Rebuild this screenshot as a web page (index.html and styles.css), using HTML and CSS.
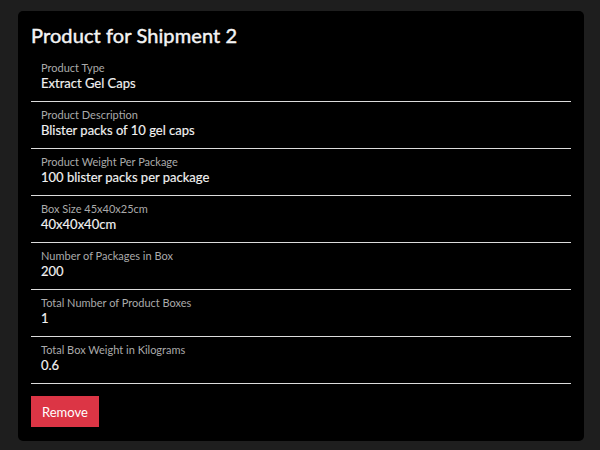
FILE: index.html
```html
<!DOCTYPE html>
<html>
<head>
<meta charset="utf-8">
<link rel="stylesheet" href="styles.css">
</head>
<body>
<div class="card">
  <h2 class="title">Product for Shipment 2</h2>
  <div class="list">
    <div class="row"><div class="label">Product Type</div><div class="value">Extract Gel Caps</div></div>
    <div class="row"><div class="label">Product Description</div><div class="value">Blister packs of 10 gel caps</div></div>
    <div class="row"><div class="label">Product Weight Per Package</div><div class="value">100 blister packs per package</div></div>
    <div class="row"><div class="label">Box Size 45x40x25cm</div><div class="value">40x40x40cm</div></div>
    <div class="row"><div class="label">Number of Packages in Box</div><div class="value">200</div></div>
    <div class="row"><div class="label">Total Number of Product Boxes</div><div class="value">1</div></div>
    <div class="row"><div class="label">Total Box Weight in Kilograms</div><div class="value">0.6</div></div>
  </div>
  <button class="btn-remove">Remove</button>
</div>
</body>
</html>
```
FILE: styles.css
```css
html, body {
  margin: 0;
  background: #1e1e1e;
  font-family: Lato, "Open Sans", sans-serif;
}
body {
  padding: 11px 16px 9px 18px;
}
.card {
  width: 566px;
  height: 430px;
  box-sizing: border-box;
  background: #000;
  border-radius: 5px;
  padding: 12px 13px 14px 13px;
  display: flex;
  flex-direction: column;
  align-items: flex-start;
}
.title {
  margin: 0 0 8px 0;
  font-size: 20px;
  line-height: 24px;
  font-weight: 400;
  color: #f4f4f4;
  -webkit-text-stroke: 0.45px #f4f4f4;
  letter-spacing: 0.1px;
}
.list {
  align-self: stretch;
  display: flex;
  flex-direction: column;
}
.row {
  padding: 6px 10px 10px 10px;
  border-bottom: 1px solid #dcdcdc;
}
.label {
  font-size: 11px;
  line-height: 14px;
  color: #aaaaaa;
}
.value {
  font-size: 13px;
  line-height: 16px;
  color: #f2f2f2;
  -webkit-text-stroke: 0.15px #f2f2f2;
}
.btn-remove {
  margin-top: 12px;
  height: 31px;
  padding: 0 11px;
  border: none;
  border-radius: 0;
  background: #dc3545;
  color: #fff;
  font-family: Lato, "Open Sans", sans-serif;
  font-size: 13px;
}
```
